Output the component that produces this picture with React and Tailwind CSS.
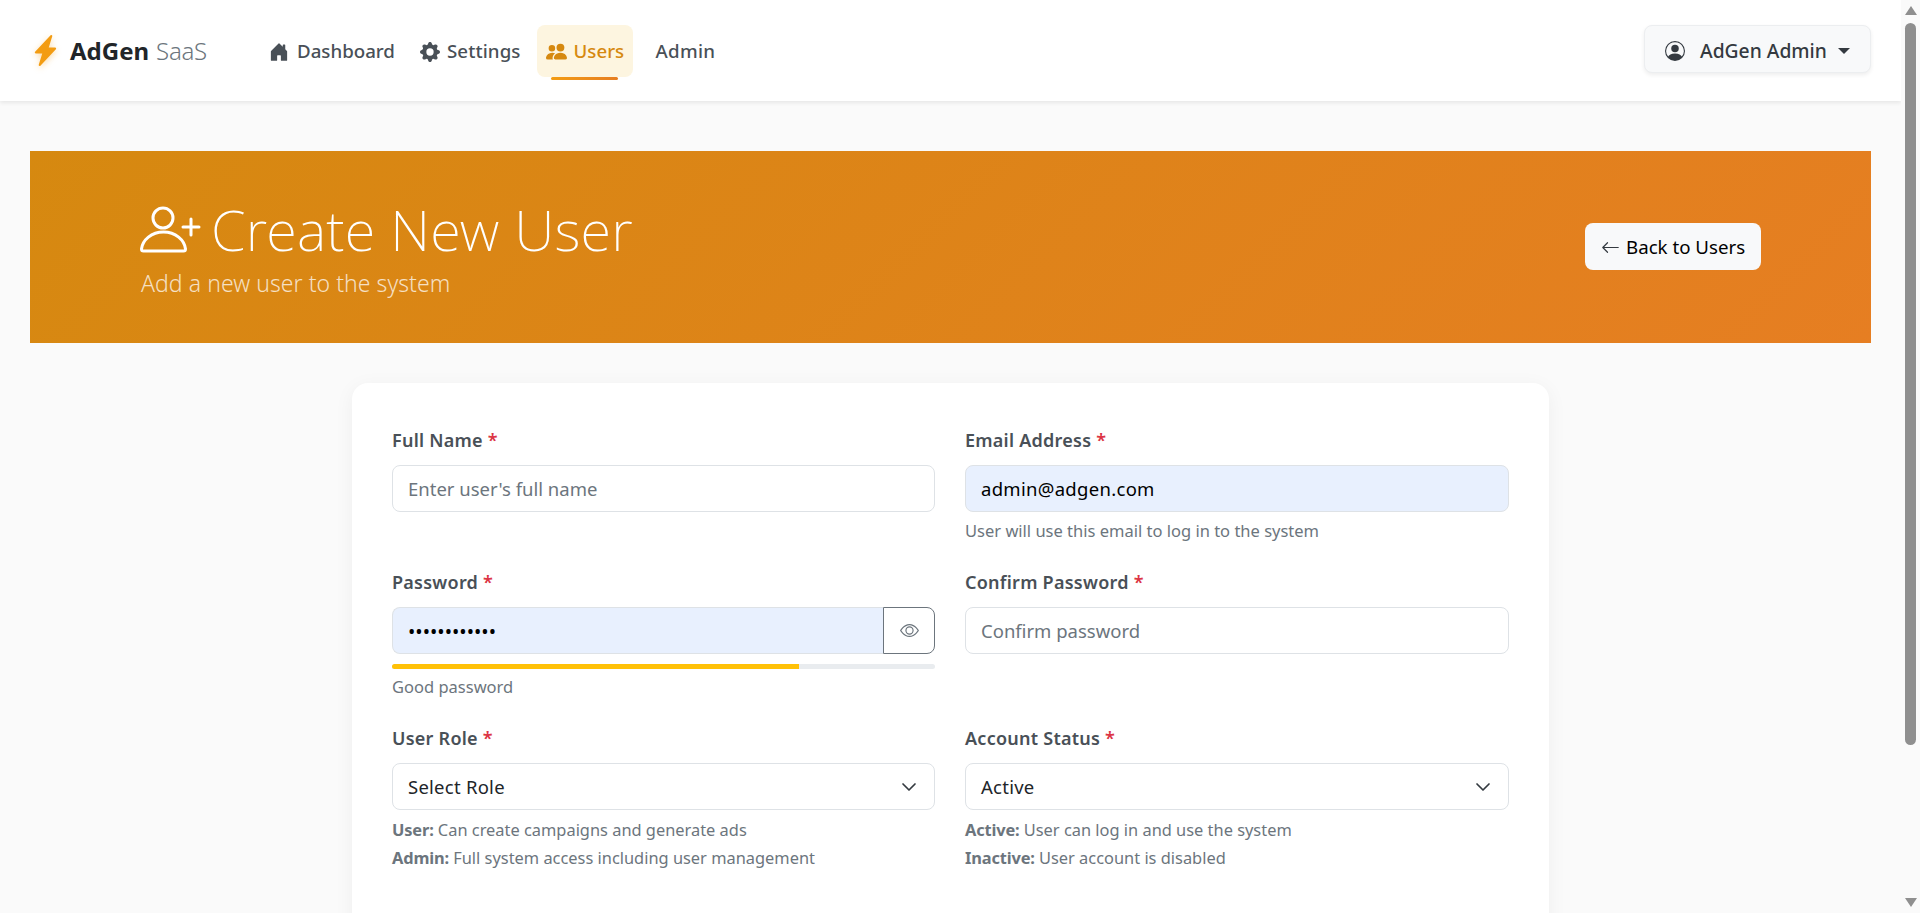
import React from "react";
import { BsHouseDoorFill, BsGearFill, BsPeopleFill, BsLightningChargeFill, BsPersonCircle, BsEye, BsArrowLeft } from "react-icons/bs";

const inputCls =
  "block w-full h-[47px] px-[15px] rounded-[8px] border border-[#dee2e6] text-[18.5px] outline-none";
const hintCls = "text-[16.5px] leading-[20px] text-[#6c757d]";

function Field({ label, hint, children }) {
  return (
    <div className="min-w-0">
      <label className="block text-[18px] leading-[26px] font-semibold text-[#495057] tracking-[0.25px] mb-[12px]">
        {label} <span className="text-[#dc3545]">*</span>
      </label>
      {children}
      {hint}
    </div>
  );
}

function Select({ value }) {
  return (
    <div className={inputCls + " flex items-center justify-between bg-white text-[#212529] tracking-[0.25px]"}>
      <span>{value}</span>
      <svg viewBox="0 0 16 16" className="w-[16px] h-[16px] mr-[2px]" fill="none" stroke="#343a40" strokeWidth="1.7" strokeLinecap="round" strokeLinejoin="round">
        <path d="m2 5 6 6 6-6" />
      </svg>
    </div>
  );
}

function Notes({ rows }) {
  return (
    <div className="mt-[6px] text-[16.4px] leading-[28px] text-[#6c757d]">
      {rows.map(([k, v]) => (
        <div key={k}>
          <strong className="font-bold tracking-[-0.15px]">{k}</strong> {v}
        </div>
      ))}
    </div>
  );
}

export default function App() {
  return (
    <div className="font-['Noto_Sans','Open_Sans',sans-serif] h-[913px] overflow-hidden flex bg-[#fafafa]">
      <div className="flex-1 min-w-0 h-full overflow-hidden">
        <nav className="h-[101px] bg-white shadow-[0_2px_4px_rgba(0,0,0,0.08)] flex items-center justify-between px-[30px] relative">
          <div className="flex items-center">
            <div className="flex items-center w-[239px]">
              <BsLightningChargeFill className="text-[31px] text-[#f39c12] drop-shadow-[0_2px_3px_rgba(243,156,18,0.35)]" />
              <span className="ml-[9px] text-[24px] leading-none text-[#212529] font-bold">AdGen</span>
              <span className="ml-[7px] text-[24px] leading-none text-[#6c757d] font-light tracking-[-0.3px]">SaaS</span>
            </div>
            <div className="flex items-center text-[18.7px] font-medium text-[#495057]">
              <a className="flex items-center h-[52px] pt-[2px] gap-[8px]">
                <BsHouseDoorFill className="text-[20px]" />
                Dashboard
              </a>
              <a className="flex items-center h-[52px] pt-[2px] gap-[7px] ml-[25px] tracking-[0.1px]">
                <BsGearFill className="text-[20px]" />
                Settings
              </a>
              <a className="relative flex items-center h-[52px] pt-[2px] gap-[7px] ml-[16px] w-[96px] pl-[9px] rounded-[8px] bg-[#fdf5e0] text-[#d68910]">
                <BsPeopleFill className="text-[21px]" />
                Users
                <span className="absolute left-[14px] right-[15px] -bottom-[3px] h-[3px] rounded-[2px] bg-gradient-to-r from-[#f39c12] to-[#e67e22]" />
              </a>
              <a className="flex items-center h-[52px] pt-[2px] ml-[23px] tracking-[0.3px]">Admin</a>
            </div>
          </div>
          <button className="flex items-center h-[48px] -mt-[3px] pt-[3px] w-[227px] pl-[20px] rounded-[8px] border border-[#eceef0] bg-[#f8f9fa] shadow-[0_2px_4px_rgba(0,0,0,0.07)] text-[19.3px] font-medium text-[#343a40]">
            <BsPersonCircle className="text-[20px]" />
            <span className="ml-[15px] pt-[2px]">AdGen Admin</span>
            <span className="ml-[11px] w-0 h-0 border-x-[6px] border-x-transparent border-t-[6px] border-t-[#343a40]" />
          </button>
        </nav>

        <div className="px-[30px] pt-[50px]">
          <header className="h-[192px] flex items-center justify-between pl-[110px] pr-[110px] bg-[linear-gradient(135deg,#d68910,#e67e22)] text-white">
            <div className="-mt-[1px]">
              <h1 className="flex items-center text-[56px] leading-[67px] font-extralight tracking-[0.17px]">
                <svg viewBox="0 0 62 47" className="w-[62px] h-[47px] mr-[9px]" fill="none" stroke="currentColor" strokeWidth="3" strokeLinecap="round" strokeLinejoin="round">
                  <circle cx="23" cy="12" r="10" />
                  <path d="M3.5 45h40c1.5 0 2-1 2-2-1-9-10-17-22-17s-21 8-22 17c0 1 .5 2 2 2z" />
                  <path d="M43 21h16M51 13v16" />
                </svg>
                Create New User
              </h1>
              <p className="mt-[5px] ml-[1px] text-[23px] leading-[30px] font-light tracking-[0.05px] text-white/75">Add a new user to the system</p>
            </div>
            <button className="flex items-center h-[47px] -mt-[2px] pt-[2px] w-[176px] pl-[16px] gap-[6px] rounded-[8px] bg-[#f8f9fa] text-[18.7px] text-black">
              <BsArrowLeft className="text-[19px] text-[#343a40]" />
              Back to Users
            </button>
          </header>

          <main className="mt-[40px] ml-[322px] w-[1197px] h-[700px] rounded-[16px] bg-white shadow-[0_4px_20px_rgba(0,0,0,0.05)] px-[40px] pt-[44px]">
            <div className="grid grid-cols-[543px_544px] gap-x-[30px] gap-y-[28px]">
              <Field label="Full Name">
                <input readOnly className={inputCls + " bg-white placeholder:text-[#6c757d]"} placeholder="Enter user's full name" />
              </Field>
              <Field
                label="Email Address"
                hint={<div className={hintCls + " mt-[9px]"}>User will use this email to log in to the system</div>}
              >
                <input readOnly className={inputCls + " bg-[#e8f0fe] text-black tracking-[0.3px]"} value="admin@adgen.com" />
              </Field>

              <Field
                label="Password"
                hint={
                  <>
                    <div className="mt-[10px] h-[5px] rounded-[3px] bg-[#e9ecef] overflow-hidden">
                      <div className="h-full w-3/4 bg-[#ffc107]" />
                    </div>
                    <div className={hintCls + " mt-[8px]"}>Good password</div>
                  </>
                }
              >
                <div className="flex">
                  <input readOnly type="password" value="password1234" className="block flex-1 min-w-0 h-[47px] px-[15px] pt-[2px] rounded-l-[8px] border border-r-0 border-[#dee2e6] bg-[#e8f0fe] text-black text-[19.5px] outline-none" />
                  <button className="w-[52px] h-[47px] flex items-center justify-center rounded-r-[8px] border border-[#6c757d] text-[#6c757d]">
                    <BsEye className="text-[19px]" />
                  </button>
                </div>
              </Field>
              <Field label="Confirm Password">
                <input readOnly className={inputCls + " bg-white placeholder:text-[#6c757d]"} placeholder="Confirm password" />
              </Field>

              <Field
                label="User Role"
                hint={<Notes rows={[["User:", "Can create campaigns and generate ads"], ["Admin:", "Full system access including user management"]]} />}
              >
                <Select value="Select Role" />
              </Field>
              <Field
                label="Account Status"
                hint={<Notes rows={[["Active:", "User can log in and use the system"], ["Inactive:", "User account is disabled"]]} />}
              >
                <Select value="Active" />
              </Field>
            </div>
          </main>
        </div>
      </div>

      <div className="w-[19px] shrink-0 h-full flex flex-col items-start pl-[4px] bg-[#fafafa]">
        <span className="mt-[6px] w-0 h-0 border-x-[6px] border-x-transparent border-b-[9px] border-b-[#8f8f8f] -ml-[0.5px]" />
        <div className="mt-[8px] w-[11px] h-[722px] rounded-full bg-[#8f8f8f]" />
        <span className="mt-auto mb-[6px] w-0 h-0 border-x-[6px] border-x-transparent border-t-[9px] border-t-[#8f8f8f] -ml-[0.5px]" />
      </div>
    </div>
  );
}
